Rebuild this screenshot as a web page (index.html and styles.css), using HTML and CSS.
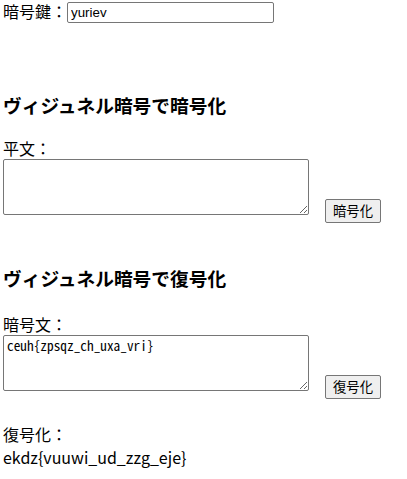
FILE: index.html
```html
<!DOCTYPE html>
<html lang="ja">
<head>
    <meta charset="UTF-8">
    <meta name="viewport" content="width=device-width, initial-scale=1.0">
    <title>ヴィジュネル暗号</title>
    <link rel="stylesheet" href="styles.css">
</head>
<body>
    <div class="key-row">
        <label for="key">暗号鍵：</label>
        <input type="text" id="key" class="key-input" value="yuriev">
    </div>

    <section class="encrypt">
        <h3>ヴィジュネル暗号で暗号化</h3>
        <label for="plain" class="field-label">平文：</label>
        <div class="io-row">
            <textarea id="plain"></textarea>
            <button id="encryptBtn">暗号化</button>
        </div>
    </section>

    <section class="decrypt">
        <h3>ヴィジュネル暗号で復号化</h3>
        <label for="cipher" class="field-label">暗号文：</label>
        <div class="io-row">
            <textarea id="cipher">ceuh{zpsqz_ch_uxa_vri}</textarea>
            <button id="decryptBtn">復号化</button>
        </div>
        <div class="result">
            <div class="field-label">復号化：</div>
            <div id="decrypted" class="field-label">ekdz{vuuwi_ud_zzg_eje}</div>
        </div>
    </section>
</body>
</html>
```

FILE: styles.css
```css
body {
    margin: 0;
    padding: 0 3px;
    font-family: "Noto Sans CJK JP", "Noto Sans", sans-serif;
    font-size: 16px;
    color: #000;
    background-color: #fff;
}
.key-row {
    display: flex;
    align-items: center;
    height: 23px;
    line-height: 23px;
}
.key-input {
    box-sizing: border-box;
    width: 207px;
    height: 21px;
    margin: 1px 0 0;
    padding: 1px 3px;
    border: 1px solid #767676;
    border-radius: 2px;
    font-family: "Liberation Sans", Arial, sans-serif;
    font-size: 13.33px;
}
h3 {
    font-size: 18.72px;
    line-height: 27px;
    font-weight: bold;
    margin: 0 0 19px;
}
.encrypt h3 {
    margin-top: 67.5px;
}
.decrypt h3 {
    margin-top: 41.5px;
    margin-bottom: 21.5px;
}
.field-label {
    display: block;
    line-height: 23px;
}
.io-row {
    display: flex;
    align-items: flex-end;
    gap: 16px;
    margin-top: -1px;
}
textarea {
    box-sizing: border-box;
    width: 306px;
    height: 56px;
    margin: 0 0 8px;
    padding: 2px 3px;
    border: 1px solid #767676;
    border-radius: 2px;
    font-family: "Noto Sans Mono CJK JP", "Liberation Mono", monospace;
    font-size: 13.33px;
    line-height: 16px;
    resize: vertical;
}
button {
    box-sizing: border-box;
    width: 56px;
    height: 24px;
    padding: 0;
    border: 1px solid #767676;
    border-radius: 2px;
    background-color: #efefef;
    font-family: "Noto Sans CJK JP", sans-serif;
    font-size: 13.33px;
    line-height: 20px;
    cursor: pointer;
}
button:hover {
    background-color: #e5e5e5;
}
.result {
    margin-top: 24.5px;
}
```
